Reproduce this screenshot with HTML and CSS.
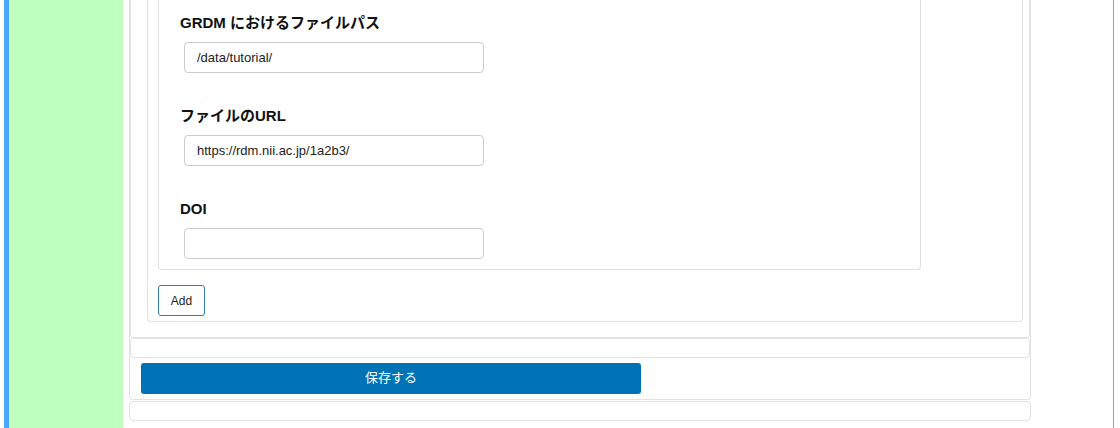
FILE: index.html
```html
<!DOCTYPE html>
<html lang="ja">
<head>
<meta charset="utf-8">
<title>Metadata form</title>
<link rel="stylesheet" href="styles.css">
</head>
<body>
<div class="page">
  <div class="accent"></div>
  <aside class="sidebar"></aside>
  <main class="main">
    <div class="frame">
      <div class="panel panel-form">
        <div class="section">
          <div class="fields">
            <div class="field">
              <label class="field-label">GRDM におけるファイルパス</label>
              <input class="field-input" type="text" value="/data/tutorial/">
            </div>
            <div class="field">
              <label class="field-label">ファイルのURL</label>
              <input class="field-input" type="text" value="https://rdm.nii.ac.jp/1a2b3/">
            </div>
            <div class="field">
              <label class="field-label">DOI</label>
              <input class="field-input" type="text" value="">
            </div>
          </div>
          <button class="btn-add" type="button">Add</button>
        </div>
      </div>
      <div class="panel panel-empty"></div>
      <div class="save-row">
        <button class="btn-save" type="button">保存する</button>
      </div>
    </div>
    <div class="panel panel-empty panel-last"></div>
  </main>
  <div class="gutter"></div>
</div>
</body>
</html>
```

FILE: styles.css
```css
* { box-sizing: border-box; }

html, body {
  margin: 0;
  padding: 0;
  background: #ffffff;
}

body {
  font-family: "Liberation Sans", "Noto Sans CJK JP", Arial, sans-serif;
  color: #222;
}

.page {
  display: flex;
  height: 428px;
  overflow: hidden;
}

.accent {
  width: 5px;
  margin-left: 4px;
  background: #4aa5ff;
  flex: none;
}

.sidebar {
  width: 114px;
  background: #bfffbf;
  flex: none;
}

.main {
  width: 902px;
  margin-left: 6px;
  flex: none;
  display: flex;
  flex-direction: column;
}

.frame {
  border: 1px solid #e2e2e2;
  border-top: none;
  border-radius: 0 0 4px 4px;
}

.panel {
  border: 1px solid #e2e2e2;
  border-radius: 4px;
}

.panel-form {
  border-top: none;
  border-radius: 0 0 4px 4px;
  padding: 0 0 15px 0;
}

.section {
  margin: 0 6px 0 16px;
  border: 1px solid #e2e2e2;
  border-top: none;
  border-radius: 0 0 4px 4px;
  padding: 0 10px 5px 10px;
}

.fields {
  width: 763px;
  border: 1px solid #e0e0e0;
  border-top: none;
  border-radius: 0 0 4px 4px;
  padding: 13px 21px 10px 21px;
  display: flex;
  flex-direction: column;
  gap: 33px;
}

.field {
  display: flex;
  flex-direction: column;
}

.field-label {
  font-size: 15px;
  font-weight: bold;
  line-height: 20px;
  margin-bottom: 9px;
  color: #111;
}

.field-input {
  width: 300px;
  height: 31px;
  margin-left: 4px;
  border: 1px solid #cccccc;
  border-radius: 4px;
  padding: 0 12px;
  font-family: "Liberation Sans", Arial, sans-serif;
  font-size: 13px;
  color: #222;
  background: #fff;
  outline: none;
}

.btn-add {
  margin-top: 15px;
  width: 47px;
  height: 31px;
  border: 1px solid #337ab7;
  border-radius: 3px;
  background: #fff;
  font-family: "Liberation Sans", Arial, sans-serif;
  font-size: 12px;
  color: #222;
  padding: 0;
}

.panel-empty {
  height: 20px;
}

.save-row {
  padding: 5px 11px 5px 11px;
}

.btn-save {
  width: 500px;
  height: 31px;
  border: none;
  border-radius: 3px;
  background: #0073b7;
  color: #ffffff;
  font-family: "Liberation Sans", "Noto Sans CJK JP", sans-serif;
  font-size: 13px;
  line-height: 16px;
  padding: 0 0 2px 0;
}

.panel-last {
  margin-top: 1px;
}

.gutter {
  width: 1px;
  margin-left: 82px;
  background: #a0a0a0;
  flex: none;
}
```
